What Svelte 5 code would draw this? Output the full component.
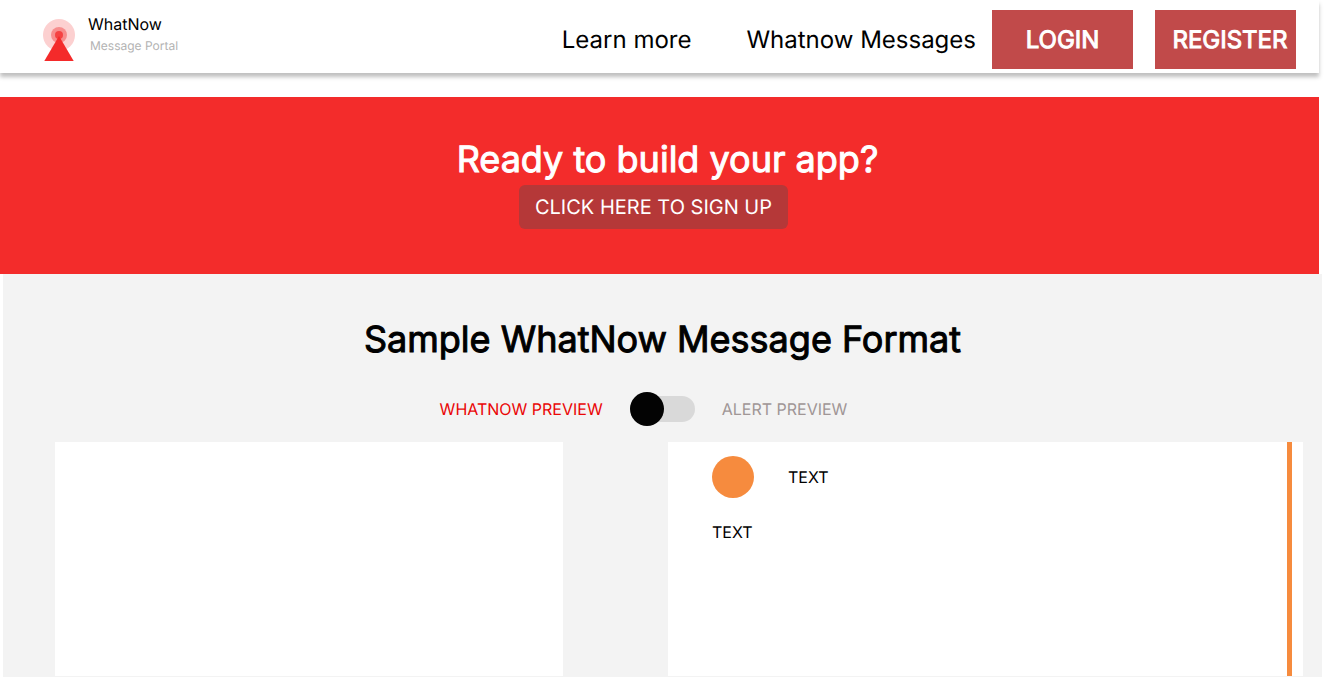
<script>
  let alertPreview = $state(false);
</script>

<header class="topbar">
  <a class="brand" href="#home">
    <svg class="logo" viewBox="0 0 32 43" aria-hidden="true">
      <circle cx="16" cy="16" r="16" fill="#f02828" fill-opacity="0.22" />
      <circle cx="16" cy="16" r="8" fill="#f02828" fill-opacity="0.4" />
      <circle cx="16" cy="16" r="4" fill="#f42a2a" fill-opacity="0.75" />
      <path d="M16 17 L30.7 42 H1.3 Z" fill="#f42a2a" />
    </svg>
    <span class="brand-text">
      <span class="brand-name">WhatNow</span>
      <span class="brand-sub">Message Portal</span>
    </span>
  </a>
  <nav class="links">
    <a href="#learn">Learn more</a>
    <a href="#messages">Whatnow Messages</a>
  </nav>
  <div class="account">
    <button class="login" type="button">LOGIN</button>
    <button class="register" type="button">REGISTER</button>
  </div>
</header>

<main>
  <section class="hero">
    <h1>Ready to build your app?</h1>
    <button class="signup" type="button">CLICK HERE TO SIGN UP</button>
  </section>

  <section class="sample">
    <h2>Sample WhatNow Message Format</h2>
    <div class="switch-row">
      <label class="active" for="preview-mode">WHATNOW PREVIEW</label>
      <input id="preview-mode" class="switch" type="checkbox" bind:checked={alertPreview} />
      <label class="muted" for="preview-mode">ALERT PREVIEW</label>
    </div>
    <div class="panels">
      <div class="panel"></div>
      <article class="panel message">
        <div class="message-body">
          <div class="message-head">
            <span class="dot"></span>
            <span>TEXT</span>
          </div>
          <p>TEXT</p>
        </div>
      </article>
    </div>
  </section>
</main>

<style>
  :global(body) {
    margin: 0;
    background: #fff;
    color: #000;
    font-family: Inter, "Liberation Sans", sans-serif;
    font-size: 16px;
    line-height: 20px;
    text-rendering: geometricPrecision;
  }

  button {
    border: 0;
    padding: 0;
    color: #fff;
    font: inherit;
    text-rendering: inherit;
    cursor: pointer;
  }

  a {
    color: inherit;
    text-decoration: none;
  }

  .topbar {
    display: flex;
    align-items: flex-start;
    box-sizing: border-box;
    min-height: 73px;
    margin-right: 5px;
    padding: 10px 23px 4px 43px;
    background: #fff;
    box-shadow: 0 4px 4px rgba(0, 0, 0, 0.25);
  }

  .brand {
    display: flex;
    gap: 13px;
    margin-right: auto;
  }

  .logo {
    width: 32px;
    height: 43px;
    margin-top: 9px;
  }

  .brand-text {
    display: flex;
    flex-direction: column;
    padding-top: 4px;
  }

  .brand-sub {
    padding: 2px;
    color: #b3b3b3;
    font-size: 12px;
  }

  .links {
    display: flex;
    gap: 55px;
    margin-right: 16px;
    font-size: 24px;
    line-height: 59px;
  }

  .account {
    display: flex;
    gap: 22px;
  }

  .account button {
    width: 141px;
    height: 59px;
    background: #c14a4a;
    font-size: 24px;
    -webkit-text-stroke: 1px currentColor;
  }

  .account .register {
    padding-left: 9px;
  }

  .hero {
    display: flex;
    flex-direction: column;
    align-items: center;
    box-sizing: border-box;
    min-height: 177px;
    margin: 24px 5px 0 0;
    padding: 38px 0 45px;
    background: #f32c2b;
  }

  h1,
  h2 {
    margin: 0 0 2px;
    font-size: 36px;
    font-weight: 400;
    line-height: 48px;
    text-align: center;
    -webkit-text-stroke: 1px currentColor;
  }

  .hero h1 {
    padding-left: 16px;
    color: #fff;
  }

  .signup {
    height: 44px;
    margin-right: 12px;
    padding: 0 16px;
    border-radius: 6px;
    background: #b53838;
    font-size: 20px;
  }

  .sample {
    margin: 0 2px 0 3px;
    padding: 41px 19px 1px 52px;
    background: #f3f3f3;
  }

  .sample h2 {
    padding-right: 33px;
  }

  .switch-row {
    display: flex;
    justify-content: center;
    align-items: center;
    gap: 27px;
    margin: 29px 0 16px;
    padding-right: 71px;
  }

  .active {
    color: #ea0606;
  }

  .muted {
    color: #a09696;
  }

  .switch {
    appearance: none;
    position: relative;
    display: flex;
    align-items: center;
    width: 65px;
    height: 34px;
    margin: 0;
    cursor: pointer;
  }

  .switch::before {
    content: "";
    position: absolute;
    inset: 4px 0;
    border-radius: 13px;
    background: #d9d9d9;
  }

  .switch::after {
    content: "";
    position: relative;
    width: 34px;
    height: 34px;
    border-radius: 50%;
    background: #030303;
  }

  .switch:checked::after {
    margin-left: auto;
  }

  .panels {
    display: grid;
    grid-template-columns: 4fr 5fr;
    gap: 105px;
  }

  .panel {
    min-height: 234px;
    background: #fff;
  }

  .message {
    display: flex;
    box-sizing: border-box;
    padding-right: 11px;
  }

  .message-body {
    flex: 1;
    padding: 14px 44px;
    border-right: 5px solid #f68b3e;
  }

  .message-head {
    display: flex;
    align-items: center;
    gap: 34px;
  }

  .dot {
    width: 42px;
    height: 42px;
    border-radius: 50%;
    background: #f68b3e;
  }

  .message p {
    margin: 24px 0 0;
  }
</style>
